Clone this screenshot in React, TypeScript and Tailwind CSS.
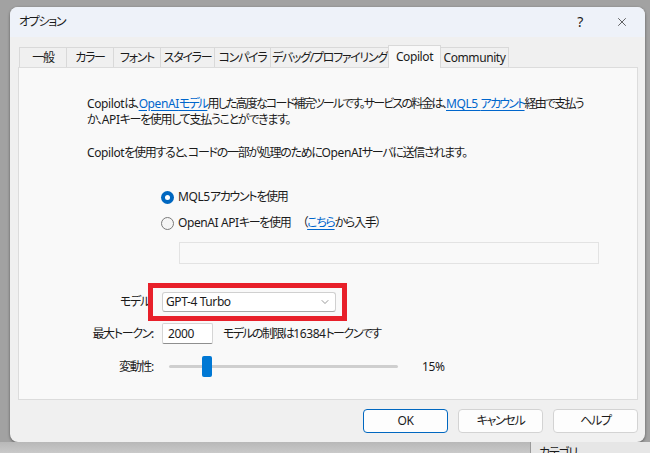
import { ChevronDown, X } from "lucide-react";

const font = "[font-family:'Noto_Sans','Noto_Sans_CJK_JP',sans-serif] [font-feature-settings:'palt']";

const tabs = [
  { label: "一般", w: "w-[48px]" },
  { label: "カラー", w: "w-[48px]" },
  { label: "フォント", w: "w-[48px]" },
  { label: "スタイラー", w: "w-[55px]" },
  { label: "コンパイラ", w: "w-[57px]" },
  { label: "デバッグ/プロファイリング", w: "w-[119px]" },
  { label: "Copilot", w: "w-[53px]", active: true, latin: true },
  { label: "Community", w: "w-[69px]", latin: true },
];

// Latin runs are a bit less condensed than the Japanese text around them
function L({ children }: { children: React.ReactNode }) {
  return <span className="tracking-[-0.4px]">{children}</span>;
}

function Link({ children }: { children: React.ReactNode }) {
  return <span className="text-[#0066cc] underline underline-offset-2">{children}</span>;
}

function Radio({ checked }: { checked?: boolean }) {
  return checked ? (
    <span className="flex h-[13px] w-[13px] shrink-0 items-center justify-center rounded-full bg-[#0067c0]">
      <span className="h-[5px] w-[5px] rounded-full bg-white" />
    </span>
  ) : (
    <span className="h-[13px] w-[13px] shrink-0 rounded-full border border-[#7a7a7a] bg-[#f5f5f5]" />
  );
}

function Button({ children, primary }: { children: React.ReactNode; primary?: boolean }) {
  return (
    <button
      className={`h-[24px] w-[85px] rounded-[4px] bg-[#fdfdfd] text-[12px] text-[#1b1b1b] ${
        primary ? "border border-[#0067c0]" : "border border-[#d3d3d3]"
      }`}
    >
      {children}
    </button>
  );
}

export default function App() {
  return (
    <div
      className={`flex h-[453px] w-[650px] flex-col overflow-hidden whitespace-nowrap bg-[#a2a2a2] ${font} text-[12px] leading-[16px] tracking-[-1.3px] text-[#1b1b1b]`}
    >
      {/* ── Dialog ── */}
      <div className="ml-[10px] mt-[7px] flex h-[435px] w-[635px] shrink-0 flex-col overflow-hidden rounded-[8px] bg-[#f0f0f0] shadow-[0_1px_3px_rgba(0,0,0,0.45)]">
        {/* Title bar */}
        <div className="flex h-[30px] shrink-0 items-center bg-[#eef2f9] pl-[9px] pr-[16px]">
          <span>オプション</span>
          <span className="ml-auto mr-[33px] text-[14px]">?</span>
          <X className="h-[14px] w-[14px] text-[#222]" strokeWidth={1.2} />
        </div>

        {/* Tabs */}
        <div className="flex h-[30px] items-end pl-[9px] pt-[8px]">
          {tabs.map((t) =>
            t.active ? (
              <div
                key={t.label}
                className={`${t.w} relative z-10 -mb-px -ml-px flex h-[23px] items-center justify-center border border-b-0 border-[#d9d9d9] bg-[#f9f9f9] tracking-[-0.4px]`}
              >
                {t.label}
              </div>
            ) : (
              <div
                key={t.label}
                className={`${t.w} -ml-px flex h-[20px] items-center justify-center border border-b-0 border-[#d9d9d9] bg-[#f0f0f0] first:ml-0 ${
                  t.latin ? "tracking-[-0.4px]" : ""
                }`}
              >
                {t.label}
              </div>
            )
          )}
        </div>

        {/* Panel */}
        <div className="ml-[8px] flex h-[333px] w-[620px] flex-col border border-[#dcdcdc] bg-[#f9f9f9]">
          <div className="pl-[68px] pt-[28px]">
            <p className="tracking-[-1.8px]">
              <L>Copilot</L>は、
              <Link>
                <L>OpenAI</L>モデル
              </Link>
              用した高度なコード補完ツールです。サービスの料金は、
              <Link>
                <L>MQL5 </L>アカウント
              </Link>
              経由で支払う
            </p>
            <p>
              か、<L>API</L>キーを使用して支払うことができます。
            </p>
            <p className="mt-[17px]">
              <L>Copilot</L>を使用すると、コードの一部が処理のために<L>OpenAI</L>サーバに送信されます。
            </p>
          </div>

          <div className="mt-[28px] flex flex-col pl-[142px]">
            <div className="flex h-[16px] items-center gap-[4px]">
              <Radio checked />
              <span>
                <L>MQL5</L>アカウントを使用
              </span>
            </div>
            <div className="mt-[10px] flex h-[16px] items-center gap-[4px]">
              <Radio />
              <span>
                <L>OpenAI API</L>キーを使用
              </span>
              <span className="ml-[8px]">
                （<Link>こちら</Link>から入手）
              </span>
            </div>
            <div className="ml-[18px] mt-[11px] h-[22px] w-[420px] border border-[#e3e3e3] bg-[#f9f9f9]" />
          </div>

          {/* Model settings */}
          <div className="mt-[28px] flex flex-col">
            <div className="flex h-[20px] items-center">
              <span className="w-[131px] text-right">モデル</span>
              <div className="relative ml-[12px]">
                <div className="flex h-[20px] w-[174px] items-center justify-between rounded-[3px] border border-[#d0d0d0] border-b-[#a8a8a8] bg-white pl-[3px] pr-[4px]">
                  <L>GPT-4 Turbo</L>
                  <ChevronDown className="h-[12px] w-[12px] text-[#555]" strokeWidth={1.2} />
                </div>
                {/* highlight */}
                <div className="absolute -bottom-[9px] -left-[14px] -right-[11px] -top-[9px] border-[5px] border-[#e8202a]" />
              </div>
            </div>

            <div className="mt-[11px] flex h-[21px] items-center">
              <span className="w-[134px] text-right">最大トークン:</span>
              <div className="ml-[9px] flex h-[21px] w-[51px] items-center rounded-[2px] border border-[#d5d5d5] border-b-[#8f8f8f] bg-white pl-[5px]">
                <L>2000</L>
              </div>
              <span className="ml-[10px] tracking-[-1.6px]">
                モデルの制限は<L>16384</L>トークンです
              </span>
            </div>

            <div className="mt-[12px] flex h-[21px] items-center">
              <span className="w-[134px] text-right">変動性:</span>
              <div className="relative ml-[16px] flex h-[21px] w-[229px] items-center">
                <div className="h-[3px] w-full rounded-full bg-[#cfcfcf]" />
                <div className="absolute left-[33px] top-0 h-[21px] w-[10px] rounded-[2px] bg-[#0078d4]" />
              </div>
              <span className="ml-[24px]">
                <L>15%</L>
              </span>
            </div>
          </div>
        </div>

        {/* Buttons */}
        <div className="mt-[9px] flex justify-end gap-[10px] pr-[7px]">
          <Button primary>
            <L>OK</L>
          </Button>
          <Button>キャンセル</Button>
          <Button>ヘルプ</Button>
        </div>
      </div>

      {/* ── Background window strip ── */}
      <div className="flex flex-1">
        <div className="w-[530px] bg-gradient-to-b from-[#b8b8b8] to-[#d4d4d4]" />
        <div className="w-px bg-[#9a9a9a]" />
        <div className="flex-1 overflow-hidden bg-[#e6e6e6] pl-[8px] pt-[4px] leading-[14px]">カテゴリ</div>
      </div>
    </div>
  );
}
